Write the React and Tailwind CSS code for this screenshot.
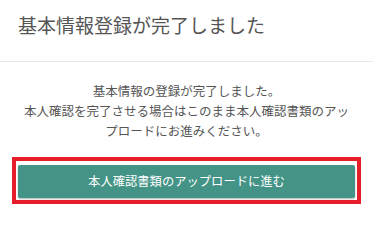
export default function App() {
  const font = { fontFamily: '"Noto Sans CJK JP", "Noto Sans", sans-serif' };
  return (
    <div className="w-[373px] h-[210px] bg-white overflow-hidden" style={font}>
      <div className="h-[61px] flex items-center pl-[18px] pb-[12px]">
        <h1 className="text-[19px] leading-none text-[#555555] font-normal">
          基本情報登録が完了しました
        </h1>
      </div>
      <div className="h-px bg-[#e8e8e8]" />
      <div className="px-[18px] pt-[19px]">
        <p className="text-[12.5px] leading-[20px] text-[#555555] text-center whitespace-nowrap">
          基本情報の登録が完了しました。
          <br />
          本人確認を完了させる場合はこのまま本人確認書類のアッ
          <br />
          プロードにお進みください。
        </p>
      </div>
      <div className="mx-[12px] mt-[16px] border-4 border-[#e61e2a] pt-[4px] pb-[2px] px-[2px]">
        <button className="w-full h-[33px] bg-[#439486] rounded-[2px] shadow-[0_1px_2px_rgba(0,0,0,0.3)] text-white text-[12.3px] flex items-center justify-center">
          本人確認書類のアップロードに進む
        </button>
      </div>
    </div>
  );
}
